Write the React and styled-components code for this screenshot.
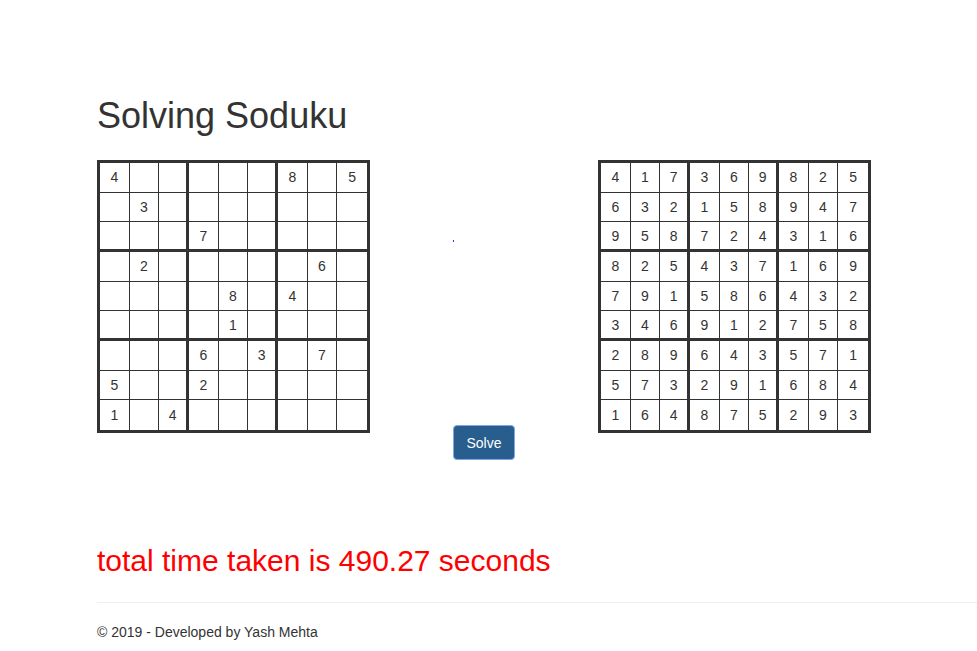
import React from 'react';
import styled, { createGlobalStyle } from 'styled-components';

const GlobalStyle = createGlobalStyle`
  body {
    margin: 0;
    background: #fff;
    color: #333;
    font-family: 'Liberation Sans', Arial, sans-serif;
    font-size: 14px;
    line-height: 20px;
  }
`;

const puzzle = [
  '4.....8.5',
  '.3.......',
  '...7.....',
  '.2.....6.',
  '....8.4..',
  '....1....',
  '...6.3.7.',
  '5..2.....',
  '1.4......',
];

const solution = [
  '417369825',
  '632158947',
  '958724316',
  '825437169',
  '791586432',
  '346912758',
  '289643571',
  '573291684',
  '164875293',
];

const Page = styled.div`
  padding: 96px 0 0 97px;
`;

const Title = styled.h1`
  margin: 0 0 24px;
  font-size: 36px;
  line-height: 40px;
  font-weight: 500;
  color: #333;
`;

const BoardsRow = styled.div`
  display: flex;
  align-items: flex-start;
`;

const Board = styled.div`
  box-sizing: border-box;
  width: 273px;
  height: 273px;
  border: 3px solid #333;
  display: grid;
  grid-template-columns: repeat(9, 1fr);
  grid-template-rows: repeat(9, 1fr);
`;

const edge = (i) => (i === 8 ? 'none' : i % 3 === 2 ? '3px solid #333' : '1px solid #333');

const Cell = styled.div`
  display: flex;
  align-items: center;
  justify-content: center;
  font-size: 14px;
  color: #333;
  border-right: ${(p) => edge(p.$col)};
  border-bottom: ${(p) => edge(p.$row)};
`;

const Middle = styled.div`
  flex: 0 0 228px;
  display: flex;
  justify-content: center;
`;

const MiddleInner = styled.div`
  width: 62px;
  display: flex;
  flex-direction: column;
  align-items: flex-start;
`;

const Loader = styled.span`
  display: block;
  width: 1px;
  height: 2px;
  margin-top: 80px;
  background: #3030e0;
`;

const SolveButton = styled.button`
  margin-top: 183px;
  box-sizing: border-box;
  width: 62px;
  height: 35px;
  padding: 0 12px;
  border: 1px solid #7fa6e8;
  border-radius: 4px;
  background: #285e8e;
  color: #fff;
  font-family: 'Liberation Sans', Arial, sans-serif;
  font-size: 14px;
  line-height: 20px;
  cursor: pointer;
`;

const Result = styled.h2`
  margin: 84px 0 0;
  font-size: 30px;
  line-height: 33px;
  font-weight: 500;
  color: #ff0000;
`;

const Rule = styled.hr`
  margin: 25px 0 0;
  height: 0;
  border: 0;
  border-top: 1px solid #eee;
`;

const Footer = styled.p`
  margin: 19px 0 0;
  font-size: 14px;
  line-height: 20px;
  color: #333;
`;

const SudokuBoard = ({ rows }) => (
  <Board>
    {rows.map((row, r) =>
      row.split('').map((ch, c) => (
        <Cell key={`${r}-${c}`} $row={r} $col={c}>
          {ch === '.' ? '' : ch}
        </Cell>
      ))
    )}
  </Board>
);

const App = () => (
  <>
    <GlobalStyle />
    <Page>
      <Title>Solving Soduku</Title>
      <BoardsRow>
        <SudokuBoard rows={puzzle} />
        <Middle>
          <MiddleInner>
            <Loader />
            <SolveButton type="button">Solve</SolveButton>
          </MiddleInner>
        </Middle>
        <SudokuBoard rows={solution} />
      </BoardsRow>
      <Result>total time taken is 490.27 seconds</Result>
      <Rule />
      <Footer>© 2019 - Developed by Yash Mehta</Footer>
    </Page>
  </>
);

export default App;
